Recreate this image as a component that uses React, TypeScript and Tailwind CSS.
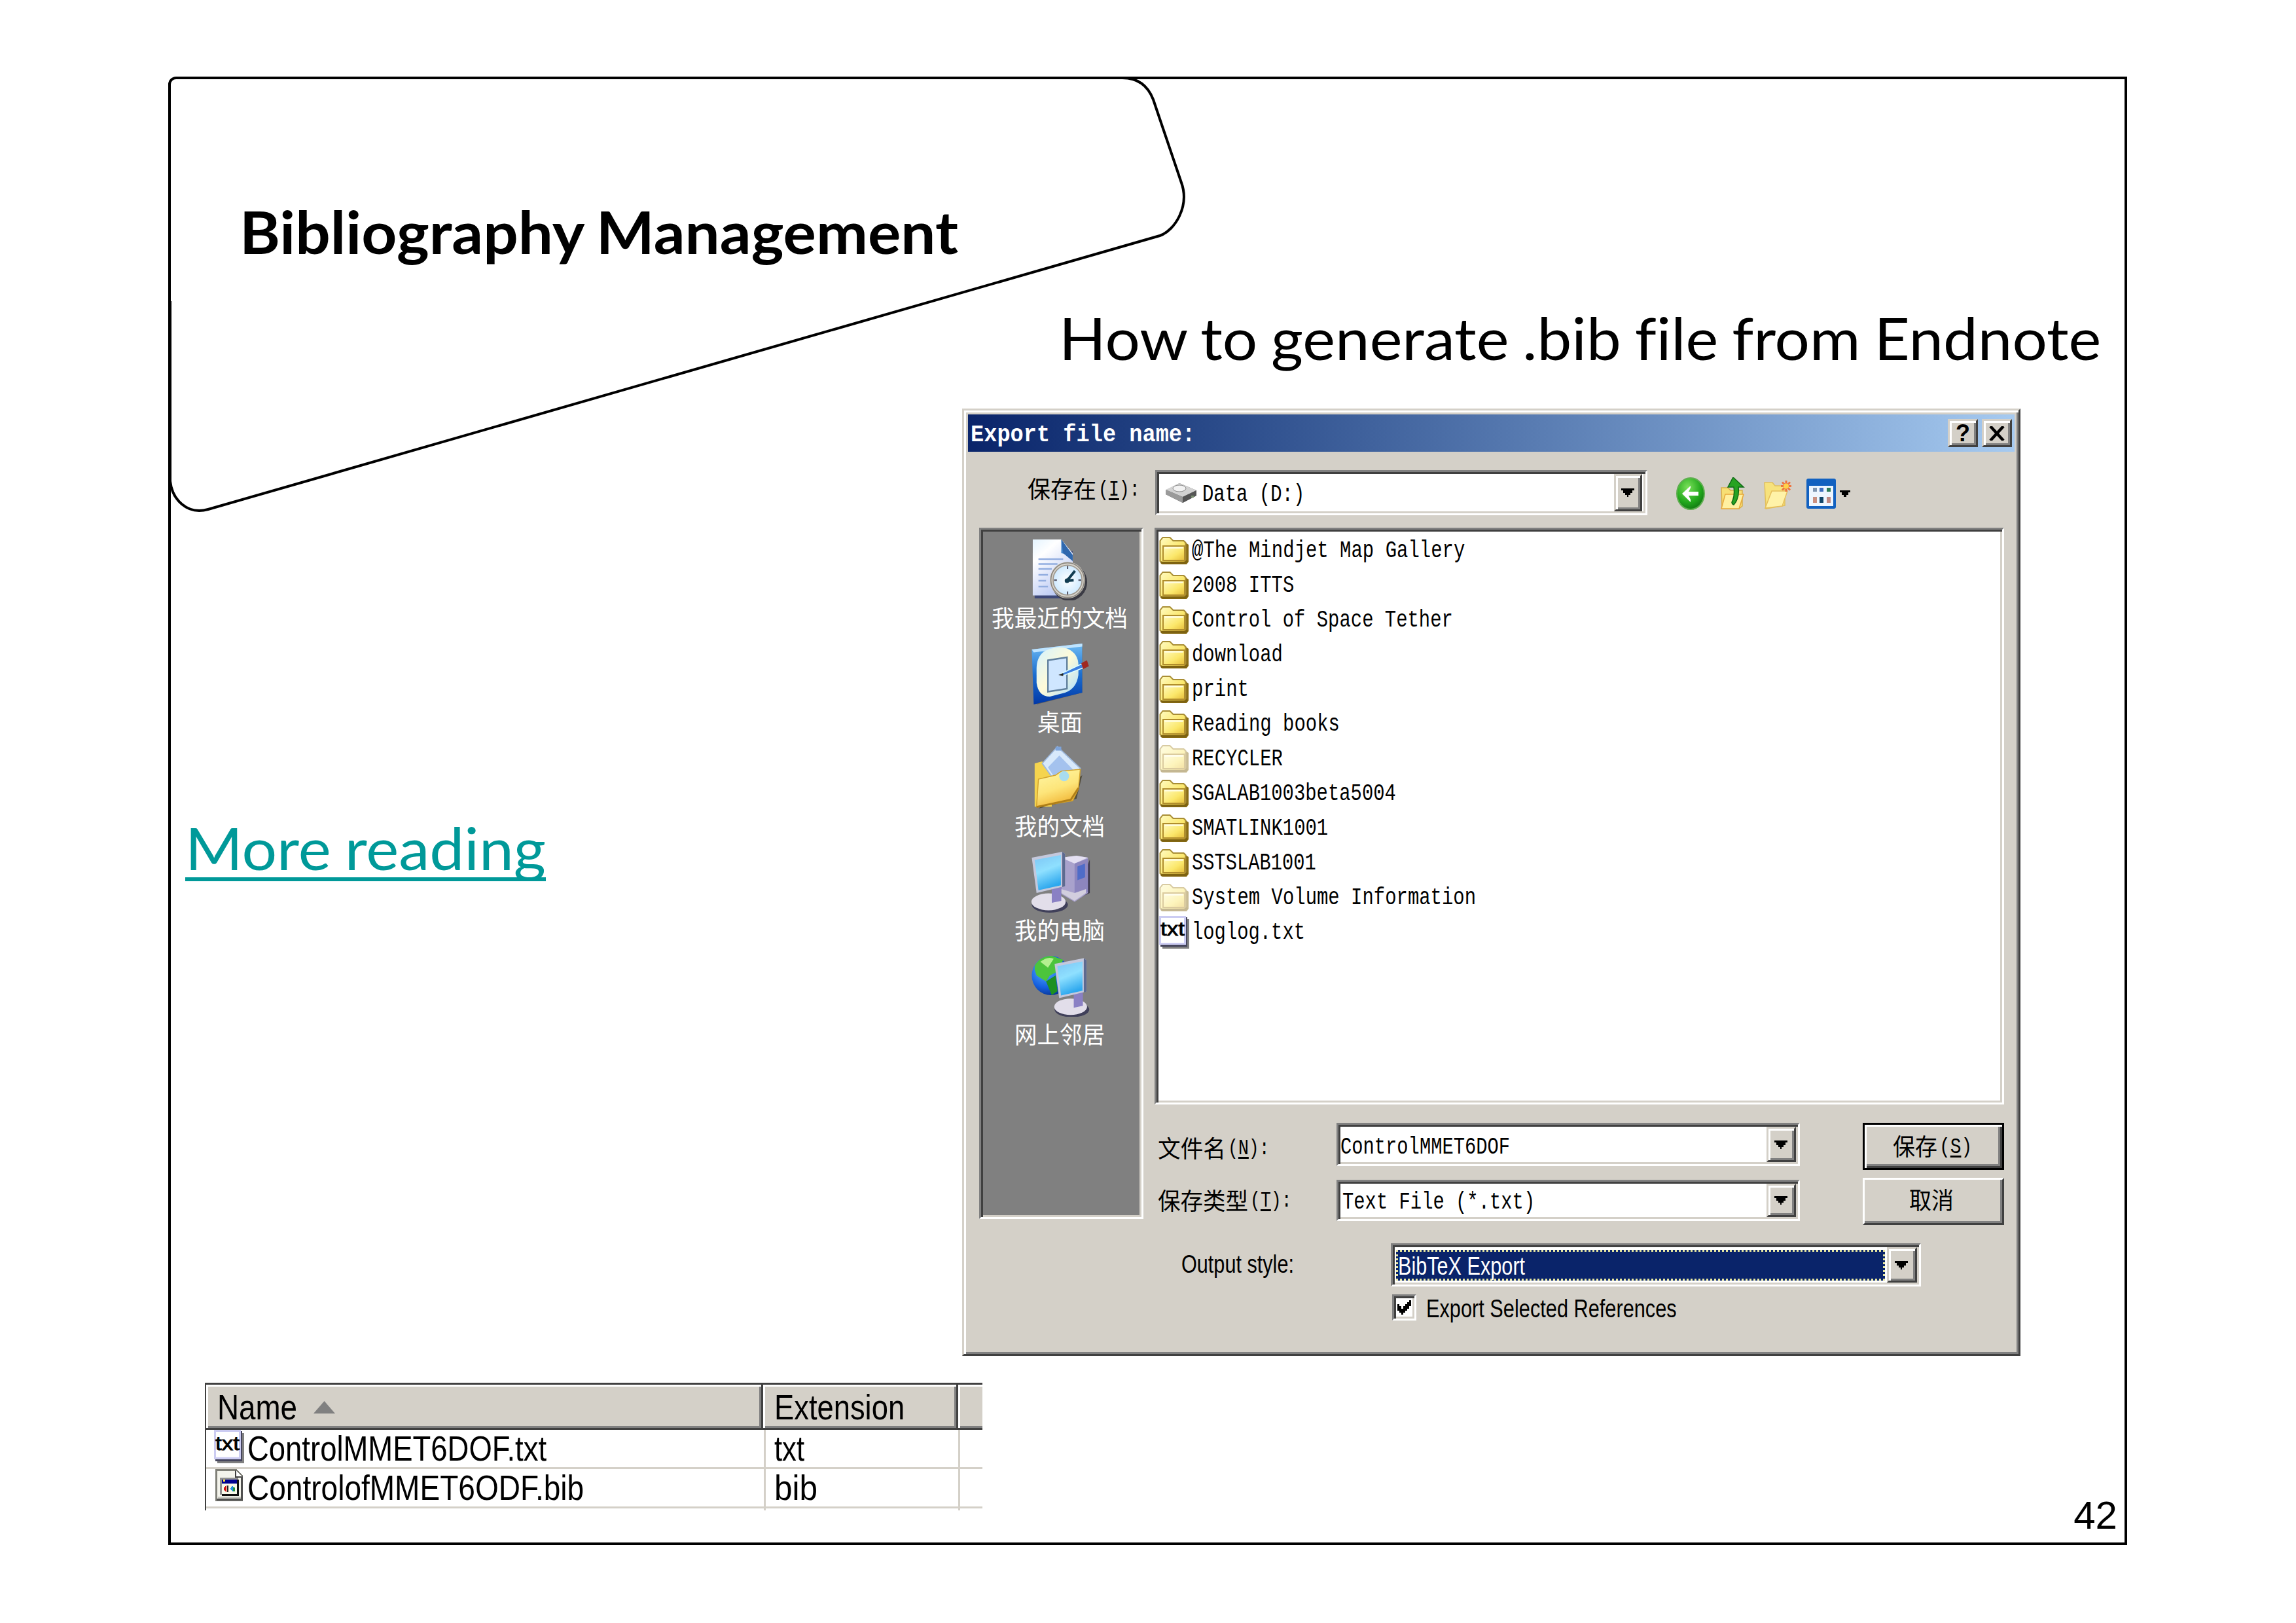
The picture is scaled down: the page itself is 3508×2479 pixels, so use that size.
import React, { useLayoutEffect, useRef } from "react";

const MONO = "font-['Liberation_Mono','Noto_Sans_CJK_SC',monospace] text-[36px] leading-[50px]";
const KEY = "font-['Liberation_Mono',monospace] text-[34px] leading-[50px]";
const SANS = "font-['Liberation_Sans',sans-serif] text-[39px] leading-[50px]";
const CJK = "font-['Noto_Sans_CJK_SC',sans-serif] text-[36px] leading-[50px]";
const SUNKEN =
  "border-[3px] border-t-[#808080] border-l-[#808080] border-b-white border-r-white shadow-[inset_3px_3px_0_#404040,inset_-3px_-3px_0_#d4d0c8]";
const RAISED =
  "bg-[#d4d0c8] border-[3px] border-t-[#d4d0c8] border-l-[#d4d0c8] border-b-[#404040] border-r-[#404040] shadow-[inset_3px_3px_0_#fff,inset_-3px_-3px_0_#808080]";

/** One line of text, stretched horizontally to the width of its box. */
function Fit({ className = "", inner = "", children }: { className?: string; inner?: string; children: React.ReactNode }) {
  const outerRef = useRef<HTMLSpanElement>(null);
  const innerRef = useRef<HTMLSpanElement>(null);
  useLayoutEffect(() => {
    const o = outerRef.current;
    const i = innerRef.current;
    if (o && i) i.style.transform = `scaleX(${o.clientWidth / i.offsetWidth})`;
  });
  return (
    <span ref={outerRef} className={`block shrink-0 whitespace-pre ${className}`}>
      <span ref={innerRef} className={`inline-block origin-left ${inner}`}>{children}</span>
    </span>
  );
}

function DropButton({ className = "" }: { className?: string }) {
  return (
    <div className={`flex shrink-0 items-center justify-center pr-[2px] ${RAISED} ${className}`}>
      <svg className="h-[13px] w-[20px]" viewBox="0 0 7 4" preserveAspectRatio="none" shapeRendering="crispEdges">
        <path d="M0 0h7v1H0zM1 1h5v1H1zM2 2h3v1H2zM3 3h1v1H3z" />
      </svg>
    </div>
  );
}

function Folder({ faded }: { faded?: boolean }) {
  return (
    <svg className={`h-[44px] w-[46px] shrink-0 ${faded ? "opacity-45" : ""}`} viewBox="0 0 46 44">
      <defs>
        <linearGradient id="fold" x1="0" y1="0" x2="1" y2="1">
          <stop offset="0" stopColor="#fffbc0" />
          <stop offset=".6" stopColor="#fbe76a" />
          <stop offset="1" stopColor="#e6bd3a" />
        </linearGradient>
      </defs>
      <path d="M2 41V7l4-5h11l5 5h17l3 4 3 2v26l-3 4H5z" fill="#8a6d14" />
      <path d="M1.500 38V7l4-5h11l5 5h16l3 3v28l-2 2H4z" fill="url(#fold)" stroke="#a98e35" strokeWidth="2" />
      <path d="M6 15h33v22H6z" fill="url(#fold)" stroke="#b08d2c" strokeWidth="2" />
      <path d="M8.500 17.500h28" stroke="#fffde0" strokeWidth="2.500" />
      <path d="M3 40.500h37l3-3" fill="none" stroke="#7d6210" strokeWidth="3.500" />
    </svg>
  );
}

function TxtIcon({ className = "" }: { className?: string }) {
  return (
    <svg className={`shrink-0 ${className}`} viewBox="0 0 46 50" preserveAspectRatio="none">
      <path d="M5 5h41v45H5z" fill="#808080" />
      <path d="M2 2h41v45H2z" fill="#45455c" />
      <path d="M1.500 1.500h38v41h-38z" fill="#fff" stroke="#ccccf2" strokeWidth="3" />
      <text x="2" y="30" textLength="37" lengthAdjust="spacingAndGlyphs" fontFamily="Liberation Sans" stroke="#000" strokeWidth=".8" fontSize="29">
        txt
      </text>
    </svg>
  );
}

function BibIcon() {
  return (
    <svg className="h-[50px] w-[43px] shrink-0" viewBox="0 0 43 50" preserveAspectRatio="none" shapeRendering="crispEdges">
      <path d="M1.500 1.500h30l9 9v37h-39z" fill="#f4f4ec" stroke="#808078" strokeWidth="3" />
      <path d="M31 2v10h10" fill="#fff" stroke="#404040" strokeWidth="2" />
      <path d="M39 11h3v37H2v-3h37z" fill="#505050" />
      <path d="M4 42h35v3H4z" fill="#c8c8c0" />
      <path d="M7 13h28v3H7z" fill="#909090" />
      <path d="M7 16h3v23H7z" fill="#909090" />
      <path d="M10 38h26v3H10zM33 16h3v25h-3z" fill="#101010" />
      <path d="M10 16h23v6H10z" fill="#000090" />
      <path d="M12 16h3v3h-3z" fill="#ffe040" />
      <path d="M10 22h23v16H10z" fill="#f8f8e8" />
      <path d="M17 25v10l-4-3v-4z" fill="#d01010" />
      <path d="M18 25h2v10h-2z" fill="#202020" />
      <path d="M26 25l3 4-2 6-4-5z" fill="#2090e0" />
      <path d="M27 28h3v6h-3z" fill="#209040" />
    </svg>
  );
}

const bigIcon = "h-[96px] w-[93px]";

function RecentIcon() {
  return (
    <svg className={bigIcon} viewBox="0 0 32 32" preserveAspectRatio="none">
      <defs>
        <linearGradient id="pg" x1="0" y1="0" x2="0.6" y2="1">
          <stop offset="0" stopColor="#e4f4ff" />
          <stop offset=".3" stopColor="#ffffff" />
          <stop offset="1" stopColor="#b9c8f4" />
        </linearGradient>
        <radialGradient id="clk">
          <stop offset="0" stopColor="#ffffff" />
          <stop offset="1" stopColor="#cfeaff" />
        </radialGradient>
      </defs>
      <path d="M2 31V3l20 4v24z" fill="#3d4878" />
      <path d="M1 1h15l6 7v21.500H1z" fill="url(#pg)" />
      <path d="M16 1l6 8-6-1z" fill="#3f83c9" />
      <path d="M16 1l6 8v3l-5-4z" fill="#2f68ae" />
      <path d="M4 11h13M4 13.500h10M4 16h7M4 19h5M4 22h4M4 25h5" stroke="#93aee0" strokeWidth=".9" />
      <circle cx="20.200" cy="22.800" r="9.400" fill="#3b3b44" />
      <circle cx="19.300" cy="21.700" r="9.300" fill="#d8d4cc" />
      <circle cx="19.300" cy="21.700" r="8.800" fill="none" stroke="#8c8880" strokeWidth=".6" />
      <circle cx="19.300" cy="21.700" r="7.600" fill="url(#clk)" stroke="#a09a90" strokeWidth=".6" />
      <path d="M19.300 14.500v1.500M19.300 27.500v1.500M12.200 21.700h1.500M25 21.700h1.500" stroke="#556" strokeWidth=".7" />
      <path d="M19 22l4.200-5M19 22l3.500-.3" stroke="#123d52" strokeWidth="1.400" />
      <circle cx="19" cy="22" r="1.200" fill="#123d52" />
    </svg>
  );
}

function DesktopIcon() {
  return (
    <svg className={bigIcon} viewBox="0 0 32 32" preserveAspectRatio="none">
      <defs>
        <linearGradient id="dk" x1="0" y1="0" x2="0" y2="1">
          <stop offset="0" stopColor="#6fbcf4" />
          <stop offset=".5" stopColor="#1c6fd0" />
          <stop offset="1" stopColor="#0038a8" />
        </linearGradient>
        <linearGradient id="pad" x1="0" y1="0" x2="1" y2="1">
          <stop offset="0" stopColor="#d4f2ff" />
          <stop offset=".5" stopColor="#fffbd8" />
          <stop offset="1" stopColor="#a8dcff" />
        </linearGradient>
      </defs>
      <path d="M3 32l24-6V3z" fill="#444" opacity=".6" />
      <path d="M.5 4L27 1v25L1.500 32z" fill="url(#dk)" />
      <path d="M.5 4L27 1v1.500L1.500 5.500z" fill="#bfe4ff" />
      <path d="M8 4.500Q14 2 19 3.500Q25 6 25 12v5Q24 24 18 26L10 28Q4 28 3 21v-7Q3 7 8 4.500z" fill="url(#pad)" />
      <path d="M9 9.500l10-1.500v16l-10 1.500z" fill="#cfe6ff" stroke="#5f7f9c" strokeWidth=".8" />
      <path d="M15.500 16.500l12-5.500 1 2-12 4.500z" fill="#3c7fe0" stroke="#dff" strokeWidth=".5" />
      <path d="M26.500 11l3-1.500 1 3-3 1.500z" fill="#a02820" />
      <path d="M14.500 17l2.500-1v1.500z" fill="#222" />
    </svg>
  );
}

function DocumentsIcon() {
  return (
    <svg className={bigIcon} viewBox="0 0 32 32" preserveAspectRatio="none">
      <defs>
        <linearGradient id="mf" x1="0" y1="0" x2="0.4" y2="1">
          <stop offset="0" stopColor="#fff8a8" />
          <stop offset=".6" stopColor="#fde57a" />
          <stop offset="1" stopColor="#f2b93a" />
        </linearGradient>
      </defs>
      <path d="M4 32l20-5 3-12z" fill="#3e3820" opacity=".7" />
      <path d="M2 9l4-1 5 7v16H2z" fill="#f5d44e" />
      <path d="M6 9l8-8.500 12 11-10 11z" fill="#d8e9fb" stroke="#9db8dc" strokeWidth=".6" />
      <path d="M9 11l6-6 8 8-8 7z" fill="#a4c2ee" />
      <path d="M13 .5h3v2h-3z" fill="#7ea4da" />
      <path d="M3 31l1-14 9-2 3-2 10-1-1 10-3 6z" fill="url(#mf)" stroke="#d2a22c" strokeWidth=".5" />
      <circle cx="17.500" cy="15.500" r="2.600" fill="#a8dcf0" />
      <path d="M3 31.200l18-3.700 4-6" fill="none" stroke="#b07f18" strokeWidth="1" />
    </svg>
  );
}

function Monitor() {
  return (
    <g>
      <ellipse cx="10" cy="28" rx="9.500" ry="4" fill="#40405a" />
      <ellipse cx="9.300" cy="26.500" rx="9" ry="4.300" fill="#e2deea" />
      <path d="M11 20l5 -1v7l-5 1z" fill="#8a80c4" />
      <path d="M.5 4l16-3 1.500 1v16.500L3 22z" fill="#c4c8dc" />
      <path d="M16.500 1l1.500 1v16.500l-1.500.5z" fill="#5d6a90" />
      <path d="M2 5.200L15.800 2.700v15.400L4 20.600z" fill="url(#scr)" />
    </g>
  );
}

function ComputerIcon() {
  return (
    <svg className={bigIcon} viewBox="0 0 32 32" preserveAspectRatio="none">
      <defs>
        <linearGradient id="scr" x1="0" y1="0" x2="0.3" y2="1">
          <stop offset="0" stopColor="#7cc4f4" />
          <stop offset=".5" stopColor="#8fe0ff" />
          <stop offset="1" stopColor="#2da8ee" />
        </linearGradient>
      </defs>
      <path d="M22 26l9-4V5z" fill="#3c3850" />
      <path d="M16 4l8-1 6 1v18l-7 4.500-7-4z" fill="#a9a2cc" />
      <path d="M16 4l8-1 6 1-7 3z" fill="#e4e0f2" />
      <path d="M23 7l7-2.500v17L23 26z" fill="#8d86be" />
      <path d="M24.500 8.500l4-1.500v7l-4 1.500z" fill="#4f6cc8" />
      <path d="M16 20l7 2 6-2v2l-6 4-7-4z" fill="#d2cede" />
      <Monitor />
    </svg>
  );
}

function NetworkIcon() {
  return (
    <svg className={bigIcon} viewBox="0 0 32 32" preserveAspectRatio="none">
      <defs>
        <radialGradient id="glb" cx=".35" cy=".35" r=".75">
          <stop offset="0" stopColor="#5ab4ff" />
          <stop offset=".6" stopColor="#1560e0" />
          <stop offset="1" stopColor="#052a80" />
        </radialGradient>
      </defs>
      <circle cx="10.500" cy="11" r="10" fill="url(#glb)" />
      <path d="M2 6q3-5 9-5l6 2-3 6-4 2-2 3-5-3-1-3z" fill="#4cc43c" />
      <path d="M5 4q4-3 7-1.500L9 7z" fill="#b4f090" />
      <path d="M8 14l5-3 1 8-3 2z" fill="#1d9020" />
      <g transform="translate(12 1.200) scale(.96 .97)">
        <Monitor />
      </g>
    </svg>
  );
}

const places = [
  { label: "我最近的文档", width: "w-[208px]", Icon: RecentIcon },
  { label: "桌面", width: "w-[69px]", Icon: DesktopIcon },
  { label: "我的文档", width: "w-[138px]", Icon: DocumentsIcon },
  { label: "我的电脑", width: "w-[138px]", Icon: ComputerIcon },
  { label: "网上邻居", width: "w-[138px]", Icon: NetworkIcon },
];

const files = [
  { name: "@The Mindjet Map Gallery", width: "w-[417px]" },
  { name: "2008 ITTS", width: "w-[156px]" },
  { name: "Control of Space Tether", width: "w-[399px]" },
  { name: "download", width: "w-[139px]" },
  { name: "print", width: "w-[87px]" },
  { name: "Reading books", width: "w-[226px]" },
  { name: "RECYCLER", width: "w-[139px]", faded: true },
  { name: "SGALAB1003beta5004", width: "w-[312px]" },
  { name: "SMATLINK1001", width: "w-[208px]" },
  { name: "SSTSLAB1001", width: "w-[190px]" },
  { name: "System Volume Information", width: "w-[434px]", faded: true },
  { name: "loglog.txt", width: "w-[173px]", txt: true },
];

/** Chinese caption followed by its access key in brackets. */
function Caption({ text, textWidth, accessKey, colon = true }: { text: string; textWidth: string; accessKey: string; colon?: boolean }) {
  return (
    <div className="flex items-center">
      <Fit className={`${CJK} ${textWidth} -mt-[2px]`}>{text}</Fit>
      <Fit className={`${KEY} ml-[3px] pt-[3px] ${colon ? "w-[64px]" : "w-[50px]"}`}>
        (<span className="underline decoration-[3px] underline-offset-[4px]">{accessKey}</span>){colon ? ":" : ""}
      </Fit>
    </div>
  );
}

function Toolbar() {
  return (
    <div className="flex items-center pt-[3px]">
      <svg className="ml-[43px] h-[50px] w-[46px]" viewBox="0 0 46 50" preserveAspectRatio="none">
        <defs>
          <radialGradient id="grn" cx=".4" cy=".3" r=".8">
            <stop offset="0" stopColor="#7be05a" />
            <stop offset=".6" stopColor="#22a81c" />
            <stop offset="1" stopColor="#0c6a10" />
          </radialGradient>
        </defs>
        <ellipse cx="23" cy="25" rx="21" ry="24" fill="url(#grn)" stroke="#5fae50" strokeWidth="2" />
        <path d="M10 25L23 13v3l-3 6h15v6H20l3 6v4z" fill="#fff" />
      </svg>
      <svg className="ml-[20px] h-[50px] w-[44px]" viewBox="0 0 44 50">
        <path d="M4 16h10l4 4h18v24l-5 4H5z" fill="#f7df74" stroke="#d9ae48" strokeWidth="1.500" />
        <path d="M4 48l6-22h28l-7 22z" fill="#fff0a0" stroke="#e8a83a" strokeWidth="1.500" />
        <path d="M22 0l16 15h-8q2 17-7 27-3-1-3-4 5-9 3-23h-9z" fill="#27a322" stroke="#0f6a14" strokeWidth="1.500" />
      </svg>
      <svg className="ml-[23px] h-[50px] w-[46px]" viewBox="0 0 46 50">
        <path d="M3 8h12l4 5h15v30L5 48z" fill="#f7e27c" stroke="#e2c05c" strokeWidth="1.500" />
        <path d="M4 47l10-26h24L30 44z" fill="#fff2a8" stroke="#e6bf5c" strokeWidth="1.500" />
        <path d="M36 5v17M28 13.500h16M30 7.500l12 12M42 7.500l-12 12" stroke="#ee7440" strokeWidth="3" />
        <circle cx="36" cy="13.500" r="4" fill="#ffd24a" />
      </svg>
      <svg className="ml-[21px] h-[46px] w-[45px]" viewBox="0 0 45 46" preserveAspectRatio="none">
        <rect width="45" height="46" rx="3" fill="#1261c0" />
        <path d="M4 11h37v31H4z" fill="#eef6ff" />
        <path d="M10 14h6v6h-6z" fill="#7f95b0" />
        <path d="M20 14h6v6h-6z" fill="#3f70c0" />
        <path d="M31 14h6v6h-6z" fill="#2c7c58" />
        <path d="M10 28h6v9h-6z" fill="#c98f80" />
        <path d="M20 28h6v9h-6z" fill="#12466a" />
        <path d="M31 28h6v9h-6z" fill="#c08a84" />
      </svg>
      <svg className="ml-[6px] h-[10px] w-[16px]" viewBox="0 0 5 3" preserveAspectRatio="none" shapeRendering="crispEdges">
        <path d="M0 0h5v1H0zM1 1h3v1H1zM2 2h1v1H2z" />
      </svg>
    </div>
  );
}

function ExportDialog() {
  return (
    <section className="h-[1447px] w-[1617px] shrink-0 border-[3px] border-t-[#d4d0c8] border-l-[#d4d0c8] border-b-[#404040] border-r-[#404040] bg-[#d4d0c8] p-[6px] shadow-[inset_3px_3px_0_#fff,inset_-3px_-3px_0_#808080]">
      <header className="flex h-[57px] items-center bg-linear-to-r from-[#0a246a] to-[#a6caf0] pr-[4px] pl-[4px] text-white">
        <Fit className={`${MONO} w-[343px] pt-[6px] font-bold`}>Export file name:</Fit>
        <div className={`ml-auto flex h-[43px] w-[46px] items-center justify-center text-black ${RAISED}`}>
          <span className="font-['Liberation_Sans',sans-serif] text-[36px] leading-[36px] font-bold">?</span>
        </div>
        <div className={`ml-[6px] flex h-[43px] w-[46px] items-center justify-center ${RAISED}`}>
          <svg className="h-[22px] w-[24px]" viewBox="0 0 24 22">
            <path d="M2 0l20 22M22 0L2 22" stroke="#000" strokeWidth="4.500" />
          </svg>
        </div>
      </header>

      <div className="mt-[28px] flex h-[69px] items-center">
        <div className="w-[286px] shrink-0 pb-[13px] pl-[91px]">
          <Caption text="保存在" textWidth="w-[105px]" accessKey="I" />
        </div>
        <div className={`flex h-[69px] w-[752px] shrink-0 items-center bg-white pr-[5px] pl-[12px] ${SUNKEN}`}>
          <svg className="h-[32px] w-[49px]" viewBox="0 0 49 32">
            <path d="M1 12L22 1l26 11v8L27 31 1 18z" fill="#6a6a6a" />
            <path d="M1 11L22 1l26 11-21 10z" fill="#d2d2d2" />
            <path d="M1 11l26 11v9L1 18z" fill="#9a9a9a" />
            <ellipse cx="22" cy="9" rx="10" ry="5" fill="#f2f2f2" stroke="#8a8a8a" />
            <path d="M27 22l21-10v8L27 31z" fill="#555" />
            <path d="M40 20h4v3h-4z" fill="#7a9070" />
          </svg>
          <Fit className={`${MONO} ml-[8px] w-[156px] pt-[7px]`}>Data (D:)</Fit>
          <DropButton className="ml-auto h-[57px] w-[43px]" />
        </div>
        <Toolbar />
      </div>

      <div className="mt-[19px] flex h-[1065px] items-start gap-[17px] pl-[17px]">
        <nav className="h-[1056px] w-[251px] shrink-0 border-[3px] border-t-[#808080] border-l-[#808080] border-b-white border-r-white bg-[#808080] p-[3px] shadow-[inset_3px_3px_0_#404040,inset_-3px_-3px_0_#d4d0c8]">
          {places.map(({ label, width, Icon }) => (
            <div key={label} className="flex h-[159px] flex-col items-center pt-[9px] text-white">
              <Icon />
              <Fit className={`${CJK} ${width} mr-[5px]`}>{label}</Fit>
            </div>
          ))}
        </nav>

        <div className="w-[1298px] shrink-0">
          <div className={`h-[881px] bg-white p-[4px] pt-[5px] ${SUNKEN}`}>
            {files.map((f) => (
              <div key={f.name} className="flex h-[53.050px] items-center gap-[4px]">
                {f.txt ? <TxtIcon className="h-[50px] w-[46px]" /> : <Folder faded={f.faded} />}
                <Fit className={`${MONO} ${f.width} pt-[2px]`}>{f.name}</Fit>
              </div>
            ))}
          </div>

          <div className="mt-[28px] flex items-start">
            <div className="flex w-[278px] shrink-0 flex-col gap-[27px] pt-[11px] pl-[5px]">
              <Caption text="文件名" textWidth="w-[104px]" accessKey="N" />
              <Caption text="保存类型" textWidth="w-[138px]" accessKey="T" />
            </div>
            <div className="flex w-[708px] shrink-0 flex-col gap-[21px]">
              <div className={`flex h-[66px] items-center bg-white pr-[3px] pl-[3px] ${SUNKEN}`}>
                <Fit className={`${MONO} w-[259px] pt-[10px]`}>ControlMMET6DOF</Fit>
                <DropButton className="ml-auto h-[54px] w-[45px]" />
              </div>
              <div className={`flex h-[63px] items-center bg-white pr-[3px] pl-[6px] ${SUNKEN}`}>
                <Fit className={`${MONO} w-[294px] pt-[7px]`}>Text File (*.txt)</Fit>
                <DropButton className="ml-auto h-[51px] w-[45px]" />
              </div>
            </div>
            <div className="ml-auto flex w-[216px] shrink-0 flex-col gap-[12px]">
              <button className="flex h-[72px] items-center justify-center border-[3px] border-black bg-[#d4d0c8] pr-[4px] pb-[2px] shadow-[inset_3px_3px_0_#fff,inset_-3px_-3px_0_#404040,inset_-6px_-6px_0_#808080]">
                <Caption text="保存" textWidth="w-[68px]" accessKey="S" colon={false} />
              </button>
              <button className="flex h-[72px] items-center justify-center border-[3px] border-t-white border-l-white border-r-[#404040] border-b-[#404040] bg-[#d4d0c8] pr-[7px] pb-[8px] shadow-[inset_-3px_-3px_0_#808080]">
                <Fit className={`${CJK} w-[68px]`}>取消</Fit>
              </button>
            </div>
          </div>
        </div>
      </div>

      <div className="mt-[28px] flex h-[66px] items-center pl-[326px]">
        <Fit className={`${SANS} w-[172px] pb-[3px]`}>Output style:</Fit>
        <div className={`ml-[148px] flex h-[66px] w-[810px] shrink-0 items-center bg-white pr-[3px] pl-[5px] ${SUNKEN}`}>
          <div className="flex h-[47px] w-[747px] items-center border-[3px] border-dotted border-[#e8e8a0] bg-[#0a246a] text-white">
            <Fit className={`${SANS} w-[194px] pt-[3px]`}>BibTeX Export</Fit>
          </div>
          <DropButton className="ml-auto h-[54px] w-[46px]" />
        </div>
      </div>

      <div className="mt-[12px] flex h-[40px] items-center pl-[648px]">
        <div className={`flex h-[40px] w-[37px] shrink-0 items-center justify-center bg-white ${SUNKEN}`}>
          <svg className="h-[22px] w-[21px]" viewBox="0 0 7 7" preserveAspectRatio="none" shapeRendering="crispEdges">
            <path d="M0 2h1v3H0zM1 3h1v3H1zM2 4h1v3H2zM3 3h1v3H3zM4 2h1v3H4zM5 1h1v3H5zM6 0h1v3H6z" />
          </svg>
        </div>
        <Fit className={`${SANS} ml-[15px] w-[383px] pt-[4px]`}>Export Selected References</Fit>
      </div>
    </section>
  );
}

const TABLE_TEXT = "font-['Liberation_Sans',sans-serif] text-[54px] leading-[57px]";
const HEAD = "flex h-[66px] items-center border-r-[3px] border-[#404040] bg-[#d4d0c8] pt-[2px] shadow-[inset_3px_3px_0_#fff,inset_-3px_-3px_0_#808080]";

function FileTable() {
  return (
    <div className="h-[195px] w-[1188px] shrink-0 overflow-hidden border-l-[2px] border-[#404040] bg-white">
      <div className="flex h-[72px] border-y-[3px] border-[#404040]">
        <div className={`${HEAD} w-[851px] shrink-0 pl-[17px]`}>
          <Fit className={`${TABLE_TEXT} w-[122px]`}>Name</Fit>
          <svg className="ml-[25px] h-[19px] w-[33px]" viewBox="0 0 33 19">
            <path d="M16.500 0L33 19H0z" fill="#808080" />
          </svg>
        </div>
        <div className={`${HEAD} w-[298px] shrink-0 pl-[17px]`}>
          <Fit className={`${TABLE_TEXT} w-[199px]`}>Extension</Fit>
        </div>
        <div className="h-[66px] grow bg-[#d4d0c8] shadow-[inset_3px_3px_0_#fff,inset_0_-3px_0_#808080]" />
      </div>
      <div className="flex h-[60px] border-b-[3px] border-[#d4d0c8]">
        <div className="flex w-[855px] shrink-0 items-center border-r-[3px] border-[#d4d0c8] pl-[12px]">
          <TxtIcon className="-mt-[6px] h-[51px] w-[46px]" />
          <Fit className={`${TABLE_TEXT} ml-[5px] w-[457px]`}>ControlMMET6DOF.txt</Fit>
        </div>
        <div className="flex w-[297px] shrink-0 items-center border-r-[3px] border-[#d4d0c8] pl-[13px]">
          <Fit className={`${TABLE_TEXT} w-[46px]`}>txt</Fit>
        </div>
      </div>
      <div className="flex h-[60px] border-b-[3px] border-[#d4d0c8]">
        <div className="flex w-[855px] shrink-0 items-center border-r-[3px] border-[#d4d0c8] pl-[14px]">
          <div className="-mt-[7px] flex"><BibIcon /></div>
          <Fit className={`${TABLE_TEXT} ml-[6px] w-[514px]`}>ControlofMMET6ODF.bib</Fit>
        </div>
        <div className="flex w-[297px] shrink-0 items-center border-r-[3px] border-[#d4d0c8] pl-[13px]">
          <Fit className={`${TABLE_TEXT} w-[66px]`}>bib</Fit>
        </div>
      </div>
      <div className="flex h-[3px]">
        <div className="w-[855px] border-r-[3px] border-[#d4d0c8]" />
        <div className="w-[297px] border-r-[3px] border-[#d4d0c8]" />
      </div>
    </div>
  );
}

const SLIDE_TEXT = "font-['Lato',sans-serif] text-[89px] leading-[104px] [font-variant-ligatures:none] [word-spacing:-3px]";

export default function App() {
  return (
    <div className="h-[2479px] w-[3508px] overflow-hidden bg-white pt-[117px] pl-[257px] text-black">
      <main className="relative h-[2243px] w-[2993px] rounded-tl-[12px] border-[4px] border-black">
        <svg className="pointer-events-none absolute top-[-4px] left-[-4px] h-[700px] w-[1600px]" viewBox="257 117 1600 700">
          <path
            d="M1715 119C1742 119 1755 134 1762 152L1805 279C1818 315 1795 352 1772 360L318 778C285 787 263 762 260 735V460"
            fill="none"
            stroke="#000"
            strokeWidth="4"
          />
        </svg>
        <h1 className={`${SLIDE_TEXT} pt-[181px] pl-[105px] font-bold`}>
          <Fit className="w-[1098px]">Bibliography Management</Fit>
        </h1>
        <h2 className={`${SLIDE_TEXT} mt-[58px] pl-[1357px]`}>
          <Fit className="w-[1592px]">How to generate .bib file from Endnote</Fit>
        </h2>
        <div className="mt-[56px] flex items-start">
          <div className={`${SLIDE_TEXT} w-[1209px] shrink-0 pt-[619px] pl-[22px] text-[#009999]`}>
            <a>
              <Fit
                className="w-[551px]"
                inner="underline decoration-[6px] underline-offset-[11px] [text-decoration-skip-ink:none]"
              >
                More reading
              </Fit>
            </a>
          </div>
          <ExportDialog />
        </div>
        <div className="mt-[41px] flex items-start justify-between pr-[11px] pl-[52px]">
          <FileTable />
          <span className="pt-[173px] font-['Liberation_Sans',sans-serif] text-[60px] leading-[60px]">42</span>
        </div>
      </main>
    </div>
  );
}
